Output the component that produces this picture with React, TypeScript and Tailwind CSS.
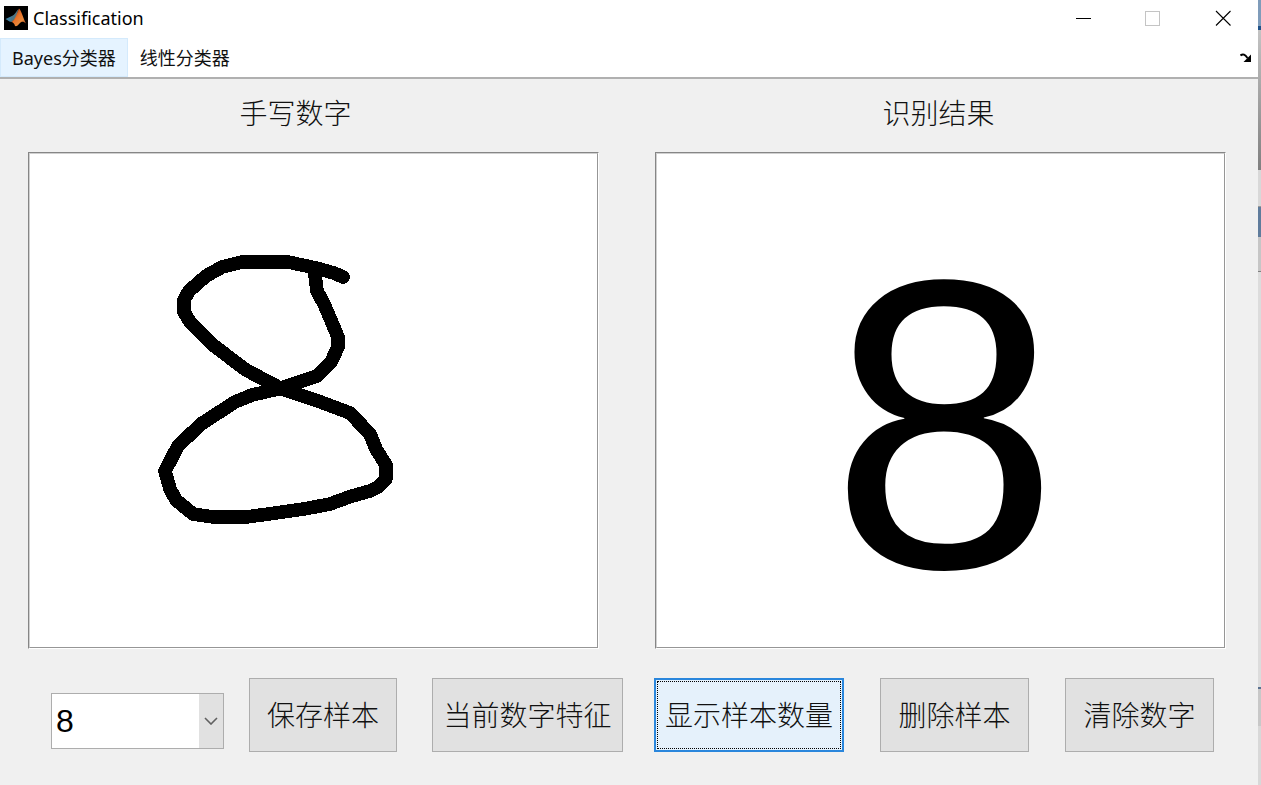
import React, { useState } from "react";

const actionClass =
  "h-[74px] shrink-0 border border-[#adadad] bg-[#e1e1e1] whitespace-nowrap";

function MatlabIcon() {
  return (
    <svg className="h-6 w-6" viewBox="0 0 24 24" aria-hidden="true">
      <defs>
        <linearGradient id="membrane" x1="0" y1="0" x2="1" y2="1">
          <stop offset="0" stopColor="#7a2410" />
          <stop offset="0.45" stopColor="#e8732a" />
          <stop offset="0.7" stopColor="#e88a3c" />
          <stop offset="1" stopColor="#9c3513" />
        </linearGradient>
      </defs>
      <rect width="24" height="24" fill="#000" />
      <path d="M1.5 13 L8 10 L10 11.5 L7.5 16 L5.5 15.5 Z" fill="#3f7f9f" />
      <path d="M8 10 C11 8.5 12 5.5 14.5 3 L12 12 L7.5 16 L6.5 14 Z" fill="#4d7482" />
      <path
        d="M15 2.5 C17 3.5 19 12 22 17.5 C19.5 15 17.5 15 15.5 17.5 C14 19.5 12.5 20.5 11 20 C10.5 18 9.5 16.5 7.5 16 C11.5 13.5 13 6.5 15 2.5 Z"
        fill="url(#membrane)"
      />
    </svg>
  );
}

function TitleBar() {
  return (
    <header className="flex h-[38px] items-center bg-white pb-0.5 pl-1">
      <MatlabIcon />
      <h1 className="ml-[5px] flex-1 text-lg leading-6 text-black">Classification</h1>
      <button type="button" aria-label="Minimize" className="flex h-9 w-[70px] items-center justify-center">
        <svg width="16" height="16" viewBox="0 0 16 16" shapeRendering="crispEdges">
          <path d="M1 8.5H16" stroke="#000" />
        </svg>
      </button>
      <button type="button" aria-label="Maximize" disabled className="flex h-9 w-[70px] items-center justify-center">
        <svg width="16" height="16" viewBox="0 0 16 16" shapeRendering="crispEdges">
          <rect x="0.5" y="1.5" width="14" height="14" fill="none" stroke="#c4c4c4" />
        </svg>
      </button>
      <button type="button" aria-label="Close" className="flex h-9 w-[70px] items-center justify-center">
        <svg width="16" height="16" viewBox="0 0 16 16">
          <path d="M1 1L15.5 15.5M15.5 1L1 15.5" stroke="#000" strokeWidth="1.1" />
        </svg>
      </button>
    </header>
  );
}

function MenuBar() {
  return (
    <nav className="flex h-[41px] border-b-2 border-[#b0b0b0] bg-white text-lg text-[#111]">
      <button type="button" className="border border-[#d4eafc] bg-[#e5f3ff] px-[11px]">
        Bayes分类器
      </button>
      <button type="button" className="px-3">
        线性分类器
      </button>
      <button type="button" aria-label="Dock" className="ml-auto flex items-center pr-[6px]">
        <svg width="12" height="10" viewBox="0 0 12 10">
          <path d="M0.5 2.5C3 0.5 5 1.5 7.5 5" fill="none" stroke="#000" strokeWidth="2" />
          <path d="M11 1.5V9H3.5Z" fill="#000" />
        </svg>
      </button>
    </nav>
  );
}

function Canvas({ children }: { children: React.ReactNode }) {
  return (
    <div className="h-[497px] border border-t-[#868686] border-r-white border-b-white border-l-[#868686]">
      <div className="flex h-full justify-center border border-t-[#d0d0d0] border-r-[#969696] border-b-[#969696] border-l-[#d0d0d0] bg-white">
        {children}
      </div>
    </div>
  );
}

function Handwriting() {
  return (
    <svg className="h-full w-full" viewBox="30 154 567 493" role="img" aria-label="8">
      <path
        d="M343 277L334 273L316 268L288 262H242L222 267L206 276L189 291L184 300V312L190 322L213 345L246 370L282 389L318 401L350 413L370 434L376 449L386 465V479L378 487L370 491L349 497L330 504L304 509L276 513L246 517H213L193 514L176 500L170 489L165 471L178 446L201 424L235 402L252 395L278 389L317 376L331 362L338 347V337L333 325L324 304L317 291L315 275"
        fill="none"
        stroke="#000"
        strokeWidth="13.6"
        strokeLinecap="round"
        strokeLinejoin="round"
        shapeRendering="crispEdges"
      />
    </svg>
  );
}

function DigitSelect() {
  const [digit, setDigit] = useState("8");
  return (
    <div className="relative mt-3 h-14 w-[173px] shrink-0 border border-[#adadad] bg-white">
      <select
        aria-label="数字"
        value={digit}
        onChange={(e) => setDigit(e.target.value)}
        className="h-full w-full appearance-none pl-1 font-['Liberation_Sans',sans-serif] text-[32px] font-normal text-black outline-none"
      >
        {["0", "1", "2", "3", "4", "5", "6", "7", "8", "9"].map((d) => (
          <option key={d}>{d}</option>
        ))}
      </select>
      <span className="pointer-events-none absolute inset-y-0 right-0 flex w-6 items-center justify-center bg-[#e1e1e1]">
        <svg width="14" height="8" viewBox="0 0 14 8">
          <path d="M1 1L7 7L13 1" fill="none" stroke="#606060" strokeWidth="1.6" />
        </svg>
      </span>
    </div>
  );
}

function DesktopEdge() {
  return (
    <div className="flex w-[3px] shrink-0 flex-col bg-[#d8d8d8]" aria-hidden="true">
      <div className="h-[26px] bg-[#7f9cba]" />
      <div className="h-1 bg-[#1f5288]" />
      <div className="h-[140px] bg-linear-to-b from-[#c4c4c4] to-[#808080]" />
      <div className="h-[37px] border-b border-[#999] bg-[#d8d8d8]" />
      <div className="h-[30px] bg-[#5f7c9c]" />
      <div className="h-[35px] border-b border-[#808080] bg-[#c6c6c6]" />
      <div className="h-[417px] border-b-2 border-[#5a7190] bg-[#dcdcdc]" />
      <div className="h-[37px] bg-[#c8c8c8]" />
    </div>
  );
}

export default function App() {
  return (
    <div className="flex min-h-screen bg-[#f0f0f0] font-['Noto_Sans','Noto_Sans_CJK_SC',sans-serif]">
      <div className="flex min-w-0 flex-1 flex-col">
        <TitleBar />
        <MenuBar />
        <main className="flex-1 text-[28px] font-light text-[#111]">
          <div className="grid grid-cols-2 gap-14 pr-8 pl-7">
            <section>
              <h2 className="flex h-[73px] items-center justify-center pr-9 pb-[6px] leading-none">手写数字</h2>
              <Canvas>
                <Handwriting />
              </Canvas>
            </section>
            <section>
              <h2 className="flex h-[73px] items-center justify-center pr-1 pb-[6px] leading-none">识别结果</h2>
              <Canvas>
                <output className="pt-16 pl-2 font-['Liberation_Sans',sans-serif] text-[412px] leading-none font-normal text-black">
                  8
                </output>
              </Canvas>
            </section>
          </div>
          <div className="flex items-center justify-between pt-[29px] pr-11 pl-[51px]">
            <div className="flex items-center gap-[35px]">
              <div className="flex items-center gap-[25px]">
                <DigitSelect />
                <button type="button" className={`${actionClass} w-[148px]`}>保存样本</button>
              </div>
              <button type="button" className={`${actionClass} w-[191px]`}>当前数字特征</button>
            </div>
            <div className="flex items-center gap-9">
              <button
                type="button"
                className="h-[74px] w-[190px] shrink-0 border-2 border-[#2a86dc] bg-[#e5f1fb] p-px whitespace-nowrap"
              >
                <span className="flex h-full items-center justify-center border border-dotted border-black">
                  显示样本数量
                </span>
              </button>
              <button type="button" className={`${actionClass} w-[149px]`}>删除样本</button>
              <button type="button" className={`${actionClass} w-[149px]`}>清除数字</button>
            </div>
          </div>
        </main>
      </div>
      <DesktopEdge />
    </div>
  );
}
